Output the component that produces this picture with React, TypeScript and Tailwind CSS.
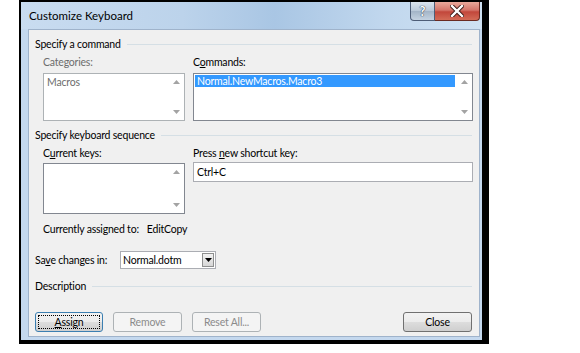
import React from 'react';

const font = { fontFamily: 'Lato, "Noto Sans", sans-serif' };

function ScrollArrows() {
  return (
    <div className="flex w-[16px] flex-col justify-between items-center py-[6px] bg-white">
      <svg width="7" height="4" viewBox="0 0 7 4"><path d="M3.5 0 L7 4 L0 4 Z" fill="#a3a3a3" /></svg>
      <svg width="7" height="4" viewBox="0 0 7 4"><path d="M0 0 L7 0 L3.5 4 Z" fill="#a3a3a3" /></svg>
    </div>
  );
}

function GroupHeading({ title }: { title: string }) {
  return (
    <div className="flex h-[16px] items-center gap-[6px] pl-[6px] pr-[7px]">
      <span className="whitespace-nowrap text-black">{title}</span>
      <div className="h-px flex-1 bg-[#d5dfe5]" />
    </div>
  );
}

function PushButton({
  label,
  disabled,
  focused,
  width = 'w-[68px]',
}: {
  label: React.ReactNode;
  disabled?: boolean;
  focused?: boolean;
  width?: string;
}) {
  if (disabled) {
    return (
      <div
        className={`${width} flex h-[20px] items-center justify-center rounded-[3px] border border-[#adb2b5] bg-[#f4f4f4] text-[#8b8b8b]`}
      >
        {label}
      </div>
    );
  }
  return (
    <div
      className={`${width} flex h-[20px] items-center justify-center rounded-[3px] border ${
        focused ? 'border-[#3c7fb1]' : 'border-[#707070]'
      } bg-[linear-gradient(#f2f2f2_0%,#ebebeb_50%,#dddddd_50%,#cfcfcf_100%)] p-[2px] text-black`}
    >
      <div
        className={`flex h-full w-full items-center justify-center ${
          focused ? 'border border-dotted border-black' : ''
        }`}
      >
        {label}
      </div>
    </div>
  );
}

export default function App() {
  return (
    <div
      className="h-[353px] w-[580px] overflow-hidden bg-white text-[10.5px] leading-none tracking-[-0.2px]"
      style={font}
    >
      <div className="ml-[19px] flex h-[344px] w-[470px] flex-col border-b-[4px] border-l-2 border-r-[7px] border-t-[2px] border-black bg-[#c4d8ee]">
        {/* title bar */}
        <div className="flex h-[27px] shrink-0 items-start bg-[linear-gradient(90deg,#c9dcf0_0%,#bcd3eb_35%,#a9c6e4_55%,#c2d8ee_80%,#cfe1f3_100%)]">
          <div className="flex h-[27px] flex-1 items-center pl-[8px] text-[11.5px] tracking-normal text-black">
            Customize Keyboard
          </div>
          <div className="mr-[2px] flex h-[19px]">
            <div className="flex w-[25px] items-center justify-center rounded-bl-[4px] border border-t-0 border-[#4d5d77] bg-[linear-gradient(#dbe4ee_0%,#b9c8d8_50%,#a3b4c7_51%,#c4d2e1_100%)]">
              <span className="text-[13px] font-bold text-white [text-shadow:0_0_1px_#1f2c40,0_0_1px_#1f2c40]">?</span>
            </div>
            <div className="flex w-[45px] items-center justify-center rounded-br-[4px] border border-l-0 border-t-0 border-[#6a2a22] bg-[linear-gradient(#e9a99b_0%,#d4756a_45%,#c2473b_55%,#d36b57_100%)]">
              <svg width="14" height="12" viewBox="0 0 14 12">
                <path d="M2 1 L12 11 M12 1 L2 11" stroke="#3a1a16" strokeWidth="4.2" strokeLinecap="square" />
                <path d="M2 1 L12 11 M12 1 L2 11" stroke="#ffffff" strokeWidth="2.4" strokeLinecap="square" />
              </svg>
            </div>
          </div>
        </div>

        {/* client area */}
        <div className="ml-[7px] mr-[2px] flex flex-1 flex-col border border-[#9fb3cb] bg-[#f0f0f0]">
          <div className="mt-[6px]">
            <GroupHeading title="Specify a command" />
          </div>

          <div className="mt-[5px] flex pl-[14px]">
            <div className="flex w-[142px] flex-col">
              <div className="h-[14px] text-[#6d6d6d]">Categories:</div>
              <div className="mt-[2px] flex h-[48px] border border-[#adb2b5] bg-white">
                <div className="flex-1 px-[3px] pt-[3px] text-[#6d6d6d]">Macros</div>
                <ScrollArrows />
              </div>
            </div>
            <div className="ml-[8px] flex w-[280px] flex-col">
              <div className="h-[14px] text-black">
                C<span className="underline">o</span>mmands:
              </div>
              <div className="mt-[2px] flex h-[48px] border border-[#828790] bg-white">
                <div className="flex-1 p-px">
                  <div className="flex h-[12px] items-center bg-[#3399ff] pl-[2px] text-white">Normal.NewMacros.Macro3</div>
                </div>
                <ScrollArrows />
              </div>
            </div>
          </div>

          <div className="mt-[6px]">
            <GroupHeading title="Specify keyboard sequence" />
          </div>

          <div className="mt-[5px] flex pl-[14px]">
            <div className="flex w-[142px] flex-col">
              <div className="h-[14px] text-black">
                C<span className="underline">u</span>rrent keys:
              </div>
              <div className="mt-px flex h-[51px] border border-[#828790] bg-white">
                <div className="flex-1" />
                <ScrollArrows />
              </div>
            </div>
            <div className="ml-[8px] flex w-[280px] flex-col">
              <div className="h-[14px] text-black">
                Press <span className="underline">n</span>ew shortcut key:
              </div>
              <div className="flex h-[20px] items-center border border-[#abadb3] bg-white pl-[3px] text-black">Ctrl+C</div>
            </div>
          </div>

          <div className="mt-[8px] flex h-[14px] items-center pl-[14px] text-black">
            <span className="whitespace-nowrap">Currently assigned to:</span>
            <span className="ml-[8px]">EditCopy</span>
          </div>

          <div className="mt-[15px] flex h-[18px] items-center pl-[6px]">
            <span className="w-[85px] whitespace-nowrap text-black">
              Sa<span className="underline">v</span>e changes in:
            </span>
            <div className="flex h-[18px] w-[96px] border border-[#abadb3] bg-white">
              <div className="flex flex-1 items-center pl-[2px] text-black">Normal.dotm</div>
              <div className="m-px flex w-[12px] items-center justify-center border border-[#8e8f8f] bg-[linear-gradient(#f2f2f2,#d6d6d6)]">
                <svg width="7" height="4" viewBox="0 0 7 4"><path d="M0 0 L7 0 L3.5 4 Z" fill="#000" /></svg>
              </div>
            </div>
          </div>

          <div className="mt-[9px]">
            <GroupHeading title="Description" />
          </div>

          <div className="mt-[18px] flex pl-[6px] pr-[7px]">
            <PushButton
              focused
              label={
                <span>
                  <span className="underline">A</span>ssign
                </span>
              }
            />
            <div className="ml-[10px]">
              <PushButton disabled label="Remove" width="w-[69px]" />
            </div>
            <div className="ml-[10px]">
              <PushButton disabled label="Reset All..." width="w-[69px]" />
            </div>
            <div className="flex-1" />
            <PushButton label="Close" width="w-[69px]" />
          </div>
        </div>
        <div className="h-[3px] shrink-0" />
      </div>
    </div>
  );
}
